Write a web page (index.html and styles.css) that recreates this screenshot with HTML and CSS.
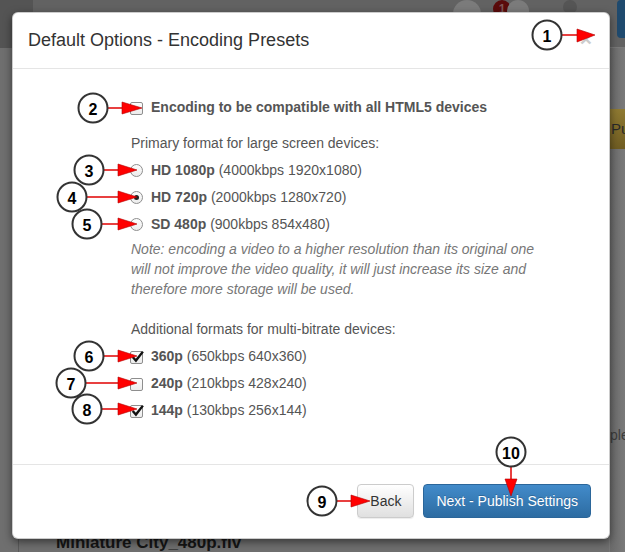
FILE: index.html
```html
<!DOCTYPE html>
<html lang="en">

<head>
    <meta charset="UTF-8">
    <meta name="viewport" content="width=device-width, initial-scale=1">
    <title>Default Options - Encoding Presets</title>
    <link rel="stylesheet" href="styles.css">
</head>

<body>

    <!-- page behind the dialog (dimmed) -->
    <div class="page">
        <div class="topbar">
            <span class="nav-icon"></span>
            <span class="top-spacer"></span>
            <span class="top-circle"></span>
            <span class="top-badge">1</span>
            <span class="top-circle small"></span>
            <span class="top-gear"></span>
            <span class="top-btn"></span>
        </div>
        <div class="page-main">
            <div class="page-left">
                <div class="file-name">Miniature City_480p.flv</div>
            </div>
            <div class="page-right">
                <div class="side-btn">Pu</div>
                <div class="side-text">ple</div>
            </div>
        </div>
    </div>

    <!-- dialog -->
    <div class="modal">
        <div class="modal-header">
            <span class="close">&times;</span>
            <h4 class="modal-title">Default Options - Encoding Presets</h4>
        </div>

        <div class="modal-body">
            <div class="form-block">
                <label class="opt first">
                    <span class="box"></span>
                    <b>Encoding to be compatible with all HTML5 devices</b>
                </label>

                <p class="group-label">Primary format for large screen devices:</p>

                <label class="opt"><span class="radio"></span><b>HD 1080p</b>&nbsp;(4000kbps 1920x1080)</label>
                <label class="opt"><span class="radio on"></span><b>HD 720p</b>&nbsp;(2000kbps 1280x720)</label>
                <label class="opt"><span class="radio"></span><b>SD 480p</b>&nbsp;(900kbps 854x480)</label>

                <p class="note">Note: encoding a video to a higher resolution than its original one will not improve the video quality, it will just increase its size and therefore more storage will be used.</p>

                <p class="group-label extra">Additional formats for multi-bitrate devices:</p>

                <label class="opt">
                    <span class="box"><svg viewBox="0 0 13 13"><path d="M2.5 6.5 L5.5 9.8 L12 1.5" /></svg></span>
                    <b>360p</b>&nbsp;(650kbps 640x360)
                </label>
                <label class="opt">
                    <span class="box"></span>
                    <b>240p</b>&nbsp;(210kbps 428x240)
                </label>
                <label class="opt">
                    <span class="box"><svg viewBox="0 0 13 13"><path d="M2.5 6.5 L5.5 9.8 L12 1.5" /></svg></span>
                    <b>144p</b>&nbsp;(130kbps 256x144)
                </label>
            </div>
        </div>

        <div class="modal-footer">
            <button class="btn btn-default">Back</button>
            <button class="btn btn-primary">Next - Publish Settings</button>
        </div>
    </div>

    <!-- numbered callouts -->
    <svg class="callouts" width="625" height="552" viewBox="0 0 625 552">
        <g class="lines">
            <line x1="562" y1="35" x2="578" y2="35" />
            <line x1="108" y1="108" x2="123" y2="108" />
            <line x1="104" y1="170" x2="119" y2="170" />
            <line x1="87" y1="197" x2="119" y2="197" />
            <line x1="102" y1="224" x2="119" y2="224" />
            <line x1="104" y1="356" x2="119" y2="356" />
            <line x1="86" y1="383" x2="119" y2="383" />
            <line x1="102" y1="409" x2="119" y2="409" />
            <line x1="337" y1="501" x2="352" y2="501" />
            <line x1="511" y1="467" x2="511" y2="480" />
        </g>
        <g class="heads">
            <polygon points="577,29 595,35 577,42" />
            <polygon points="122,102 142,108 122,114" />
            <polygon points="118,164 137,170 118,176" />
            <polygon points="118,191 137,197 118,203" />
            <polygon points="118,218 137,224 118,230" />
            <polygon points="118,350 137,356 118,362" />
            <polygon points="118,377 137,383 118,389" />
            <polygon points="118,403 137,409 118,415" />
            <polygon points="351,495 370,501 351,507" />
            <polygon points="505,479 511,496 517,479" />
        </g>
        <g class="dots">
            <circle cx="547" cy="35" r="14.5" />
            <circle cx="93" cy="108" r="14.5" />
            <circle cx="89" cy="170" r="14.5" />
            <circle cx="72" cy="197" r="14.5" />
            <circle cx="87" cy="224" r="14.5" />
            <circle cx="89" cy="356" r="14.5" />
            <circle cx="71" cy="383" r="14.5" />
            <circle cx="87" cy="409" r="14.5" />
            <circle cx="322" cy="501" r="14.5" />
            <circle cx="511" cy="452" r="14.5" />
        </g>
        <g class="nums">
            <text x="547" y="36">1</text>
            <text x="93" y="109">2</text>
            <text x="89" y="171">3</text>
            <text x="72" y="198">4</text>
            <text x="87" y="225">5</text>
            <text x="89" y="357">6</text>
            <text x="71" y="384">7</text>
            <text x="87" y="410">8</text>
            <text x="322" y="502">9</text>
            <text x="511" y="453">10</text>
        </g>
    </svg>

</body>

</html>
```

FILE: styles.css
```css
* {
    box-sizing: border-box;
}

body {
    font-family: "Liberation Sans", Arial, sans-serif;
    font-size: 14px;
    line-height: 20px;
    color: #555;
    background-color: #6f6f6f;
    margin: 0;
    padding: 0;
    width: 625px;
    height: 552px;
    overflow: hidden;
    position: relative;
}

/* dimmed page behind the dialog */
.page {
    height: 552px;
    display: flex;
    flex-direction: column;
}

.topbar {
    height: 48px;
    display: flex;
    align-items: flex-start;
    background-color: #626262;
    border-bottom: 1px solid #7a7a7a;
}

.nav-icon {
    width: 33px;
    height: 48px;
    background-color: #545454;
}

.top-spacer {
    flex: 1;
}

.top-circle {
    width: 28px;
    height: 28px;
    border-radius: 50%;
    background-color: #7b7b7b;
    margin-top: 0;
}

.top-circle.small {
    width: 22px;
    height: 22px;
    margin-left: -4px;
}

.top-badge {
    width: 18px;
    height: 18px;
    margin-left: 12px;
    margin-top: 0;
    border-radius: 50%;
    background-color: #5a0b0b;
    color: #7d5555;
    font-size: 12px;
    line-height: 18px;
    text-align: center;
    font-weight: bold;
}

.top-gear {
    width: 14px;
    height: 14px;
    margin: 0 40px 0 34px;
    border-radius: 50%;
    background-color: #555;
}

.top-btn {
    width: 8px;
    height: 38px;
    margin-top: 0;
    border-radius: 4px 0 0 4px;
    background-color: #1f4a6e;
}

.page-main {
    flex: 1;
    display: flex;
}

.page-left {
    flex: 1;
    display: flex;
    flex-direction: column;
    justify-content: flex-end;
    padding-left: 18px;
}

.file-name {
    border-left: 1px solid #5a5a5a;
    padding: 0 0 4px 37px;
    font-size: 17px;
    font-weight: bold;
    color: #161616;
    height: 16px;
    line-height: 14px;
}

.page-right {
    width: 16px;
    border-left: 1px solid #777;
    background: linear-gradient(to right, #6a6a6a, #7a7a7a);
}

.side-btn {
    margin-top: 61px;
    height: 40px;
    padding-left: 1px;
    background: linear-gradient(#8f7a32, #6f5c22);
    color: #2a2a2a;
    font-size: 15px;
    line-height: 40px;
    overflow: hidden;
    white-space: nowrap;
}

.side-text {
    margin-top: 276px;
    color: #3c3c3c;
    font-size: 14px;
    white-space: nowrap;
    overflow: hidden;
}

/* dialog */
.modal {
    position: absolute;
    top: 12px;
    left: 12px;
    width: 598px;
    background-color: #fff;
    border: 1px solid rgba(0, 0, 0, 0.2);
    border-radius: 6px;
    box-shadow: 0 3px 9px rgba(0, 0, 0, 0.5);
}

.modal-header {
    padding: 15px;
    border-bottom: 1px solid #e5e5e5;
}

.modal-title {
    margin: 0;
    font-size: 18px;
    font-weight: normal;
    line-height: 25px;
    color: #333;
}

.close {
    float: right;
    margin-top: -2px;
    margin-right: 2px;
    font-size: 21px;
    font-weight: bold;
    line-height: 25px;
    color: #ccc;
}

.modal-body {
    padding: 28px 20px 44px 117px;
}

.form-block {
    display: flex;
    flex-direction: column;
    align-items: flex-start;
}

.opt {
    display: flex;
    align-items: center;
    height: 20px;
    margin-top: 7px;
    white-space: nowrap;
}

.opt.first {
    margin-top: 0;
}

.opt b {
    font-weight: bold;
}

.box {
    position: relative;
    width: 13px;
    height: 13px;
    margin-right: 8px;
    margin-top: 2px;
    border: 1px solid #8e8e8e;
    border-radius: 2px;
    background: linear-gradient(#fdfdfd, #ececec);
}

.box svg {
    position: absolute;
    left: -1px;
    top: -2px;
    width: 14px;
    height: 14px;
    overflow: visible;
}

.box path {
    fill: none;
    stroke: #111;
    stroke-width: 2.2;
}

.radio {
    position: relative;
    width: 13px;
    height: 13px;
    margin-right: 8px;
    border: 1px solid #8e8e8e;
    border-radius: 50%;
    background: linear-gradient(#fdfdfd, #ececec);
}

.radio.on::after {
    content: "";
    position: absolute;
    left: 3px;
    top: 3px;
    width: 5px;
    height: 5px;
    border-radius: 50%;
    background-color: #222;
}

.group-label {
    margin: 16px 0 0 1px;
}

.group-label.extra {
    margin-top: 20px;
}

.note {
    width: 425px;
    margin: 5px 0 0 1px;
    font-style: italic;
    color: #777;
}

.modal-footer {
    padding: 19px 18px 20px 20px;
    text-align: right;
    border-top: 1px solid #e5e5e5;
}

.btn {
    display: inline-block;
    padding: 6px 12px;
    font-family: inherit;
    font-size: 14px;
    line-height: 20px;
    border: 1px solid transparent;
    border-radius: 4px;
    cursor: pointer;
}

.btn + .btn {
    margin-left: 5px;
}

.btn-default {
    color: #333;
    background: linear-gradient(#fff, #e0e0e0);
    border-color: #ccc;
    box-shadow: inset 0 1px 0 rgba(255, 255, 255, 0.15), 0 1px 1px rgba(0, 0, 0, 0.075);
}

.btn-primary {
    color: #fff;
    background: linear-gradient(#428bca, #2d6ca2);
    border-color: #2b669a;
    text-shadow: 0 -1px 0 rgba(0, 0, 0, 0.2);
}

/* callouts */
.callouts {
    position: absolute;
    top: 0;
    left: 0;
    pointer-events: none;
}

.callouts line {
    stroke: #e00000;
    stroke-width: 1.5;
}

.callouts polygon {
    fill: #ff0000;
    stroke: #b00000;
    stroke-width: 0.6;
}

.callouts circle {
    fill: #fff;
    stroke: #333;
    stroke-width: 2;
}

.callouts text {
    font-family: "Liberation Sans", Arial, sans-serif;
    font-size: 16px;
    font-weight: bold;
    fill: #000;
    text-anchor: middle;
    dominant-baseline: central;
}
```
